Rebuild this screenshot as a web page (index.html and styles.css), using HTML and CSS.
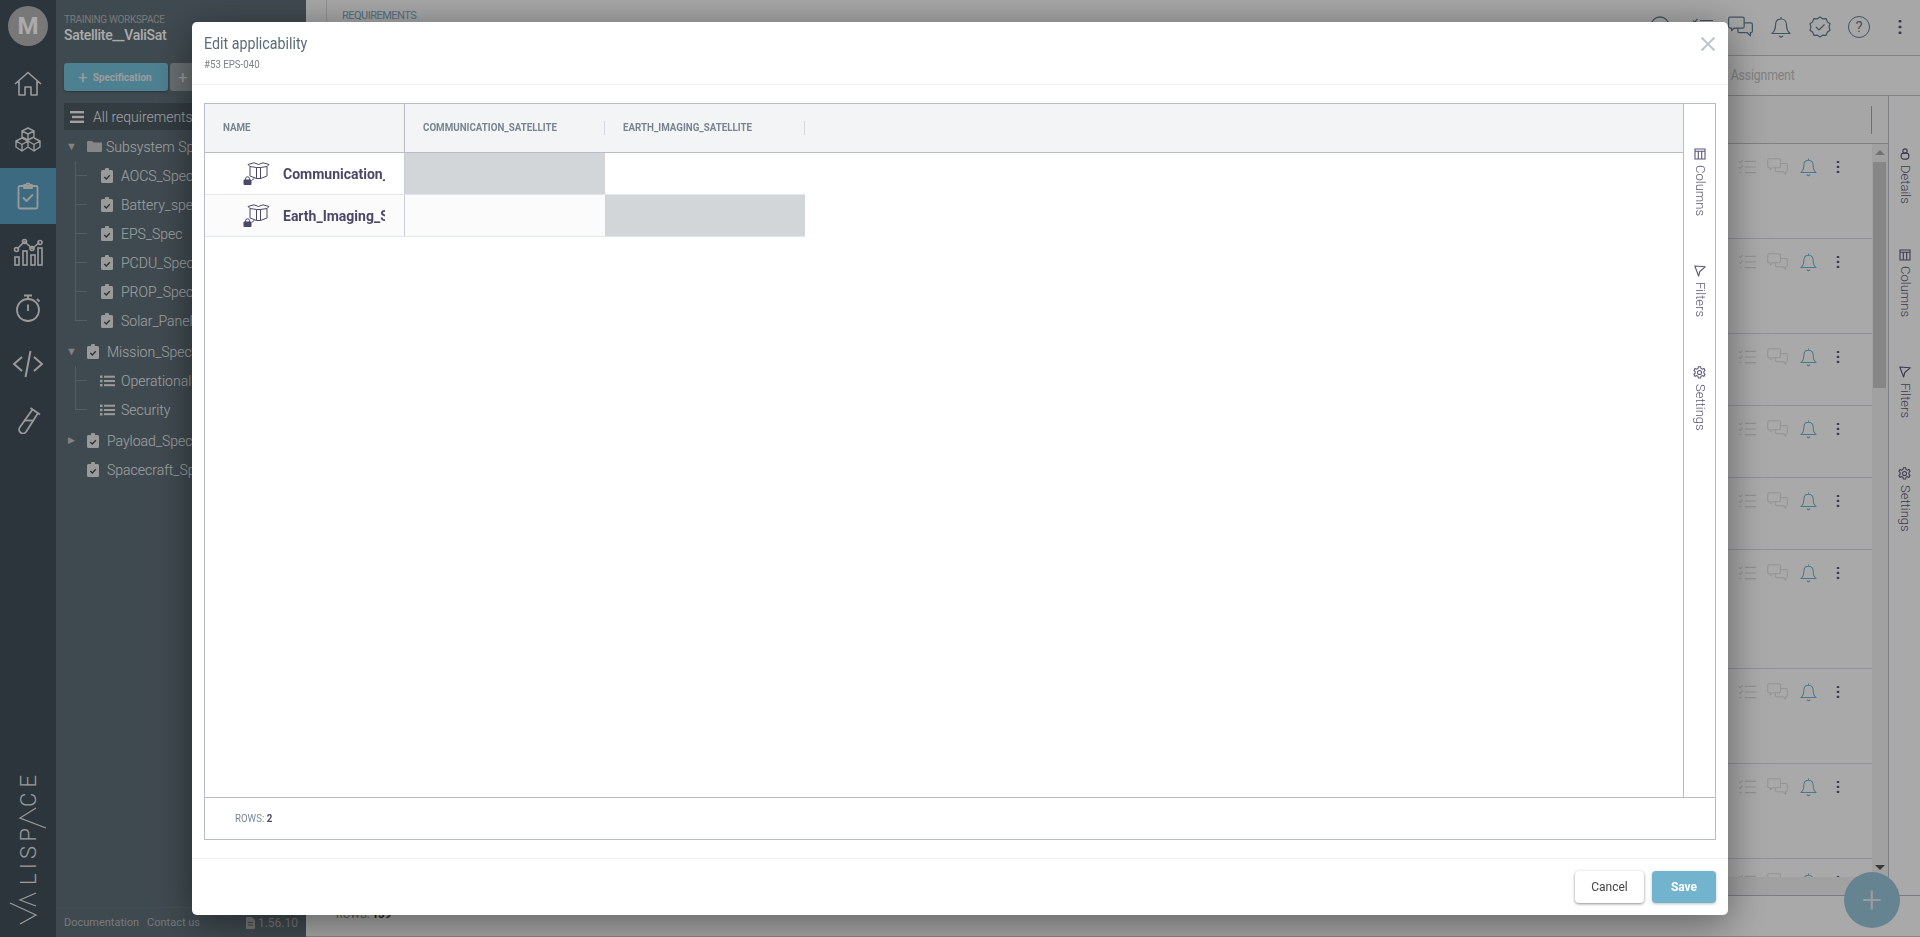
FILE: index.html
```html
<!DOCTYPE html>
<html lang="en">
<head>
<meta charset="utf-8">
<title>Edit applicability</title>
<link rel="stylesheet" href="styles.css">
</head>
<body>
<svg class="defs" width="0" height="0" aria-hidden="true">
  <symbol id="i-check" viewBox="0 0 22 18"><g fill="none" stroke="currentColor" stroke-width="1.2"><path d="M8 2.500h13M8 9h13M8 15.500h13"/><path d="M1 2.500l1.600 1.600L5.500 1M1 9l1.600 1.600L5.500 7.500"/><path d="M1.500 15.500h2.500"/></g></symbol>
  <symbol id="i-comment" viewBox="0 0 24 21"><g fill="none" stroke="currentColor" stroke-width="1.2" stroke-linejoin="round"><path d="M2 1h12a1.500 1.500 0 0 1 1.500 1.500V10a1.500 1.500 0 0 1-1.500 1.500H6L3.500 14v-2.500H2A1.500 1.500 0 0 1 .6 10V2.500A1.500 1.500 0 0 1 2 1z"/><path d="M15.500 6.500H22a1.500 1.500 0 0 1 1.400 1.500v6.500a1.500 1.500 0 0 1-1.400 1.500h-.5V19l-3-3H11a1.500 1.500 0 0 1-1.500-1.500v-3"/></g></symbol>
  <symbol id="i-bell" viewBox="0 0 20 22"><g fill="none" stroke="currentColor" stroke-width="1.200" stroke-linejoin="round"><path d="M10 .5v2M10 2.500c-3.500 0-5.500 2.500-5.500 6 0 3.500-.6 6-3.500 8.500h18c-2.900-2.500-3.500-5-3.500-8.500 0-3.500-2-6-5.500-6z"/><path d="M8 19.500l2 1.200 2-1.200"/></g></symbol>
  <symbol id="i-dots" viewBox="0 0 4 16"><g fill="currentColor"><rect x="0.500" y="1" width="3" height="2.500" rx="1"/><rect x="0.500" y="6.700" width="3" height="2.500" rx="1"/><rect x="0.500" y="12.400" width="3" height="2.500" rx="1"/></g></symbol>
  <symbol id="i-spec" viewBox="0 0 12 15"><path fill="currentColor" d="M4 2V1.500a2 2 0 0 1 4 0V2h2.500A1.500 1.500 0 0 1 12 3.500v10a1.500 1.500 0 0 1-1.500 1.500h-9A1.500 1.500 0 0 1 0 13.500v-10A1.500 1.500 0 0 1 1.500 2z"/><path fill="none" stroke="#414c52" stroke-width="1.300" d="M3.300 9l2 2 3.500-3.800"/></symbol>
  <symbol id="i-list" viewBox="0 0 15 12"><g fill="currentColor"><rect y="0.500" width="2.500" height="2.500"/><rect y="4.800" width="2.500" height="2.500"/><rect y="9" width="2.500" height="2.500"/><rect x="4" y="0.700" width="11" height="2"/><rect x="4" y="5" width="11" height="2"/><rect x="4" y="9.200" width="11" height="2"/></g></symbol>
  <symbol id="i-cols" viewBox="0 0 12 12"><path fill="none" stroke="currentColor" stroke-width="1.100" d="M1 1h10v10H1zM1 3.200h10M4.300 3.200V11M7.700 3.200V11"/></symbol>
  <symbol id="i-filter" viewBox="0 0 12 12"><path fill="none" stroke="currentColor" stroke-width="1.100" stroke-linejoin="round" d="M.8 1L11.200 1.800 5.800 6.500 4.600 11z"/></symbol>
  <symbol id="i-gear" viewBox="0 0 14 14"><g fill="none" stroke="currentColor" stroke-width="1.100"><circle cx="7" cy="7" r="2.200"/><path d="M5.800 .8h2.400l.4 1.800 1.500.8 1.700-.7 1.200 2.100-1.300 1.200v1.800l1.300 1.200-1.200 2.100-1.700-.7-1.500.8-.4 1.800H5.800l-.4-1.800-1.500-.8-1.700.7L1 9.000l1.300-1.200V6L1 4.800 2.200 2.700l1.700.7 1.500-.8z"/></g></symbol>
  <symbol id="i-details" viewBox="0 0 12 14"><g fill="none" stroke="currentColor" stroke-width="1.300"><circle cx="6" cy="3.500" r="2.500"/><rect x="1.500" y="6" width="9" height="7" rx="3"/></g></symbol>
  <symbol id="i-lockbox" viewBox="0 0 28 23"><g fill="none" stroke="#4a4868" stroke-width="1" stroke-linejoin="round"><path d="M7 4.500V14l6.500 2.500h4L24 14V4.500"/><path d="M13.500 5.500v11M17.500 5.500v11"/><path d="M5 2.500L11 .8l4.500 1.700L20 .8l6 1.700-2 2-6.500 1h-4L7 4.500z"/><path d="M8.500 18.500l3-2.200"/><path d="M2.500 18v-1.200a2 2 0 0 1 4 0V18"/></g><rect x="0.500" y="17.500" width="8" height="5.500" rx="1" fill="#4a4868"/></symbol>
</svg>

<div class="app">
  <nav class="rail">
    <div class="avatar">M</div>
    <a class="rail-item">
      <svg width="28" height="26" viewBox="0 0 28 26"><path fill="none" stroke="currentColor" stroke-width="1.600" stroke-linejoin="round" d="M1 13L14 1.500 27 13M5 10v14h6v-8h6v8h6V10"/></svg>
    </a>
    <a class="rail-item">
      <svg width="28" height="26" viewBox="0 0 28 26"><g fill="none" stroke="currentColor" stroke-width="1.400" stroke-linejoin="round"><path d="M14 1l6 3v6l-6 3-6-3V4zM8 4l6 3 6-3M14 7v6"/><path d="M8 11l6 3v6l-6 4-6-4v-6zM2 14l6 3.500L14 14M8 17.500V24"/><path d="M20 11l6 3v6l-6 4-6-4M14 14l6 3.500L26 14M20 17.500V24"/></g></svg>
    </a>
    <a class="rail-item active">
      <svg width="22" height="28" viewBox="0 0 22 28"><g fill="none" stroke="currentColor" stroke-width="1.800" stroke-linejoin="round"><rect x="1.500" y="4" width="19" height="22.500" rx="1.500"/><path d="M7 4V2.800h2.500a1.500 1.500 0 0 1 3 0H15V6H7z"/><path d="M6 15.500l3.500 3.500 6.500-6.500"/></g></svg>
    </a>
    <a class="rail-item">
      <svg width="30" height="28" viewBox="0 0 30 28"><g fill="none" stroke="currentColor" stroke-width="1.600"><rect x="2" y="19" width="4" height="8"/><rect x="10" y="13" width="4" height="14"/><rect x="18" y="17" width="4" height="10"/><rect x="25" y="10" width="4" height="17"/><path d="M4 11l7.500-7.500 7.500 7 7.500-6"/><circle cx="3.500" cy="11.500" r="2"/><circle cx="11.500" cy="3.500" r="2"/><circle cx="19" cy="10.500" r="2"/><circle cx="27" cy="4.500" r="2"/></g></svg>
    </a>
    <a class="rail-item">
      <svg width="26" height="28" viewBox="0 0 26 28"><g fill="none" stroke="currentColor" stroke-width="1.800"><circle cx="13" cy="16" r="11"/><path d="M9 1.500h8M13 1.500V5M13 10.500V17M22 5l2.500 2.500"/></g></svg>
    </a>
    <a class="rail-item">
      <svg width="32" height="28" viewBox="0 0 32 28"><path fill="none" stroke="currentColor" stroke-width="2" d="M10 7L2 14l8 7M22 7l8 7-8 7M18.500 1l-5 26"/></svg>
    </a>
    <a class="rail-item">
      <svg width="28" height="28" viewBox="0 0 28 28"><g fill="none" stroke="currentColor" stroke-width="1.800" stroke-linejoin="round"><path d="M16.500 2L26 8.500M18.500 3.500L6 21a3.700 3.700 0 0 0 6 5L24 7"/><path d="M10.500 14.500h9"/></g></svg>
    </a>
    <div class="rail-fill"></div>
    <svg class="logo" width="56" height="160" viewBox="0 0 56 160" role="img" aria-label="Valispace">
      <g fill="none" stroke="currentColor" stroke-width="1.200">
        <path d="M10 128l26 12-16 9"/>
        <path d="M36 118l-16 7 16 6"/>
        <path d="M46 53L20 43l16-10"/>
      </g>
      <text class="logo-text" transform="translate(36 110) rotate(-90)" textLength="57">LISP</text>
      <text class="logo-text" transform="translate(36 32) rotate(-90)" textLength="32">CE</text>
    </svg>
  </nav>

  <aside class="sidebar">
    <header class="ws">
      <div class="ws-label">TRAINING WORKSPACE</div>
      <div class="ws-name">Satellite__ValiSat</div>
    </header>
    <div class="side-actions">
      <button class="btn-spec"><span class="plus">+</span>Specification</button>
      <button class="btn-more"><span class="plus">+</span>Folder</button>
    </div>
    <div class="all-req">
      <svg width="14" height="12" viewBox="0 0 14 12"><g fill="currentColor"><rect width="14" height="2.400"/><rect x="2" y="4.800" width="12" height="2.400"/><rect y="9.600" width="14" height="2.400"/></g></svg>
      <span>All requirements</span>
    </div>
    <ul class="tree">
      <li class="node"><span class="arrow">▼</span><svg class="folder" width="15" height="11" viewBox="0 0 15 11"><path fill="currentColor" d="M0 1a1 1 0 0 1 1-1h4l1.500 1.500H14a1 1 0 0 1 1 1V10a1 1 0 0 1-1 1H1a1 1 0 0 1-1-1z"/></svg><span>Subsystem Specs</span></li>
      <li>
        <ul class="children">
          <li class="child"><i class="branch"></i><svg class="ico"><use href="#i-spec"/></svg><span>AOCS_Spec</span></li>
          <li class="child"><i class="branch"></i><svg class="ico"><use href="#i-spec"/></svg><span>Battery_spec</span></li>
          <li class="child"><i class="branch"></i><svg class="ico"><use href="#i-spec"/></svg><span>EPS_Spec</span></li>
          <li class="child"><i class="branch"></i><svg class="ico"><use href="#i-spec"/></svg><span>PCDU_Spec</span></li>
          <li class="child"><i class="branch"></i><svg class="ico"><use href="#i-spec"/></svg><span>PROP_Spec</span></li>
          <li class="child"><i class="branch"></i><svg class="ico"><use href="#i-spec"/></svg><span>Solar_Panel_Spec</span></li>
        </ul>
      </li>
      <li class="node gap"><span class="arrow">▼</span><svg class="ico"><use href="#i-spec"/></svg><span>Mission_Spec</span></li>
      <li>
        <ul class="children">
          <li class="child"><i class="branch"></i><svg class="ico-list"><use href="#i-list"/></svg><span>Operational</span></li>
          <li class="child"><i class="branch"></i><svg class="ico-list"><use href="#i-list"/></svg><span>Security</span></li>
        </ul>
      </li>
      <li class="node gap"><span class="arrow small">▶</span><svg class="ico"><use href="#i-spec"/></svg><span>Payload_Spec</span></li>
      <li class="node"><span class="arrow"></span><svg class="ico"><use href="#i-spec"/></svg><span>Spacecraft_Spec</span></li>
    </ul>
    <footer class="side-foot">
      <a>Documentation</a><a>Contact us</a>
      <span class="ver"><svg width="9" height="12" viewBox="0 0 9 12"><path fill="currentColor" fill-rule="evenodd" d="M1 0h5l3 3v8a1 1 0 0 1-1 1H1a1 1 0 0 1-1-1V1a1 1 0 0 1 1-1zM2 5v1h5V5zm0 2.500v1h5v-1z"/></svg>1.56.10</span>
    </footer>
  </aside>

  <main class="main">
    <div class="topbar">
      <div class="crumb-gutter"></div>
      <div class="crumb">REQUIREMENTS</div>
      <div class="top-icons">
        <svg class="t-search" viewBox="0 0 24 24"><g fill="none" stroke="currentColor" stroke-width="1.300"><circle cx="11" cy="11" r="9"/><path d="M18 18l5 5"/></g></svg>
        <svg class="t-check"><use href="#i-check"/></svg>
        <svg class="t-comment"><use href="#i-comment"/></svg>
        <svg class="t-bell"><use href="#i-bell"/></svg>
        <svg class="t-badge" viewBox="0 0 22 22"><g fill="none" stroke="currentColor" stroke-width="1.200"><path d="M11 1l2.800 1.800 3.300-.2 1.200 3.100 2.700 2-1 3.300 1 3.200-2.700 2-1.200 3.100-3.300-.2L11 21l-2.800-1.900-3.300.2-1.200-3.100-2.700-2 1-3.200-1-3.300 2.700-2 1.200-3.100 3.300.2z"/><path d="M7 11l3 3 5.500-5.500"/></g></svg>
        <span class="t-help">?</span>
        <svg class="t-dots"><use href="#i-dots"/></svg>
      </div>
    </div>
    <div class="tabs"><span>Assignment</span></div>
    <div class="content">
      <section class="list">
        <div class="toolbar"><i class="tool-sep"></i></div>
        <div class="scroller">
          <div class="rows">
            <div class="row h95"><svg class="a-check"><use href="#i-check"/></svg><svg class="a-comment"><use href="#i-comment"/></svg><svg class="a-bell"><use href="#i-bell"/></svg><svg class="a-dots"><use href="#i-dots"/></svg></div>
            <div class="row h95"><svg class="a-check"><use href="#i-check"/></svg><svg class="a-comment"><use href="#i-comment"/></svg><svg class="a-bell"><use href="#i-bell"/></svg><svg class="a-dots"><use href="#i-dots"/></svg></div>
            <div class="row h72"><svg class="a-check"><use href="#i-check"/></svg><svg class="a-comment"><use href="#i-comment"/></svg><svg class="a-bell"><use href="#i-bell"/></svg><svg class="a-dots"><use href="#i-dots"/></svg></div>
            <div class="row h72"><svg class="a-check"><use href="#i-check"/></svg><svg class="a-comment"><use href="#i-comment"/></svg><svg class="a-bell"><use href="#i-bell"/></svg><svg class="a-dots"><use href="#i-dots"/></svg></div>
            <div class="row h72"><svg class="a-check"><use href="#i-check"/></svg><svg class="a-comment"><use href="#i-comment"/></svg><svg class="a-bell"><use href="#i-bell"/></svg><svg class="a-dots"><use href="#i-dots"/></svg></div>
            <div class="row h119"><svg class="a-check"><use href="#i-check"/></svg><svg class="a-comment"><use href="#i-comment"/></svg><svg class="a-bell"><use href="#i-bell"/></svg><svg class="a-dots"><use href="#i-dots"/></svg></div>
            <div class="row h95"><svg class="a-check"><use href="#i-check"/></svg><svg class="a-comment"><use href="#i-comment"/></svg><svg class="a-bell"><use href="#i-bell"/></svg><svg class="a-dots"><use href="#i-dots"/></svg></div>
            <div class="row h95"><svg class="a-check"><use href="#i-check"/></svg><svg class="a-comment"><use href="#i-comment"/></svg><svg class="a-bell"><use href="#i-bell"/></svg><svg class="a-dots"><use href="#i-dots"/></svg></div>
            <div class="row h95"><svg class="a-check"><use href="#i-check"/></svg><svg class="a-comment"><use href="#i-comment"/></svg><svg class="a-bell"><use href="#i-bell"/></svg><svg class="a-dots"><use href="#i-dots"/></svg></div>
          </div>
          <div class="vbar">
            <span class="vbar-up"></span>
            <span class="vbar-thumb"></span>
            <span class="vbar-fill"></span>
            <span class="vbar-down"></span>
          </div>
        </div>
        <div class="hbar"><span class="hbar-right"></span></div>
      </section>
      <aside class="side-tools">
        <div class="tool tool-short"><svg class="tool-ico"><use href="#i-details"/></svg><span>Details</span></div>
        <div class="tool"><svg class="tool-ico"><use href="#i-cols"/></svg><span>Columns</span></div>
        <div class="tool"><svg class="tool-ico"><use href="#i-filter"/></svg><span>Filters</span></div>
        <div class="tool"><svg class="tool-ico-g"><use href="#i-gear"/></svg><span>Settings</span></div>
      </aside>
    </div>
    <footer class="main-foot">ROWS: <b>139</b></footer>
  </main>
</div>

<button class="fab">+</button>

<div class="backdrop">
  <div class="modal">
    <header class="m-head">
      <div>
        <h1 class="m-title"><span>Edit applicability</span></h1>
        <div class="m-sub"><span>#53 EPS-040</span></div>
      </div>
      <svg class="m-close" width="16" height="16" viewBox="0 0 16 16"><path fill="none" stroke="currentColor" stroke-width="2" d="M1.500 1.500l13 13M14.500 1.500l-13 13"/></svg>
    </header>
    <div class="m-body">
      <div class="grid-box">
        <div class="grid-main">
          <div class="grid">
            <div class="g-head">
              <div class="h-name"><span>NAME</span></div>
              <div class="h-col"><span>COMMUNICATION_SATELLITE</span></div>
              <div class="h-col"><span>EARTH_IMAGING_SATELLITE</span></div>
            </div>
            <div class="g-row">
              <div class="c-name"><svg class="lockbox"><use href="#i-lockbox"/></svg><span class="name-text">Communication_Satellite</span></div>
              <div class="c-val on"></div>
              <div class="c-val"></div>
            </div>
            <div class="g-row alt">
              <div class="c-name"><svg class="lockbox"><use href="#i-lockbox"/></svg><span class="name-text">Earth_Imaging_Satellite</span></div>
              <div class="c-val"></div>
              <div class="c-val on"></div>
            </div>
          </div>
          <aside class="grid-tools">
            <div class="tool"><svg class="tool-ico"><use href="#i-cols"/></svg><span>Columns</span></div>
            <div class="tool"><svg class="tool-ico"><use href="#i-filter"/></svg><span>Filters</span></div>
            <div class="tool"><svg class="tool-ico-g"><use href="#i-gear"/></svg><span>Settings</span></div>
          </aside>
        </div>
        <div class="grid-foot"><span>ROWS: <b>2</b></span></div>
      </div>
    </div>
    <footer class="m-foot">
      <button class="b-cancel">Cancel</button>
      <button class="b-save">Save</button>
    </footer>
  </div>
</div>
</body>
</html>
```

FILE: styles.css
```css
* { box-sizing: border-box; }
html, body { margin: 0; height: 100%; overflow: hidden; }
body { font-family: "Roboto", "Liberation Sans", sans-serif; background: #fcfcfc; color: #333; }
ul { list-style: none; margin: 0; padding: 0; }
button { font-family: inherit; border: 0; cursor: pointer; }
.defs { display: block; height: 0; width: 0; }

.app { display: flex; height: 937px; }

/* rail */
.rail { width: 56px; flex: none; display: flex; flex-direction: column; align-items: center; background: #425058; color: #e6e6e6; padding-bottom: 2px; }
.avatar { width: 40px; height: 40px; margin: 6px 0 10px; border-radius: 50%; background: #b4b4b4; color: #fff; font-weight: 700; font-size: 24px; line-height: 40px; text-align: center; }
.rail-item { width: 56px; height: 56px; display: flex; align-items: center; justify-content: center; }
.rail-item.active { background: #5a9ebf; }
.rail-fill { flex: 1; }
.logo { color: #e6e6e6; overflow: visible; flex: none; }
.logo-text { font-family: "Roboto", sans-serif; font-weight: 300; font-size: 22px; fill: currentColor; }

/* sidebar */
.sidebar { width: 250px; flex: none; display: flex; flex-direction: column; background: #5f6f78; color: #f0f0f0; overflow: hidden; }
.ws { padding: 14px 8px 0; height: 63px; }
.ws-label { font-size: 10px; line-height: 12px; color: #b4b4b4; letter-spacing: -.3px; }
.ws-name { font-size: 14px; line-height: 18px; font-weight: 500; letter-spacing: -.3px; color: #fff; }
.side-actions { display: flex; gap: 2px; padding-left: 8px; }
.btn-spec { width: 104px; height: 28px; background: #74c0da; color: #e8e8e8; border-radius: 3px; font-size: 10px; font-weight: 700; display: flex; align-items: center; padding: 0 14px; white-space: nowrap; box-shadow: 0 1px 2px rgba(0,0,0,.3); }
.btn-more { width: 80px; height: 28px; background: #9ea6ab; color: #e8e8e8; border-radius: 3px; font-size: 10px; font-weight: 700; display: flex; align-items: center; padding: 0 8px; }
.plus { font-size: 17px; font-weight: 400; margin-right: 5px; }
.all-req { margin: 12px 0 0 8px; height: 27px; background: #4c5a61; display: flex; align-items: center; gap: 9px; padding-left: 6px; font-size: 14px; font-weight: 300; white-space: nowrap; }
.tree { flex: 1; padding: 2px 0 0 8px; font-size: 14px; font-weight: 300; color: #f0f0f0; white-space: nowrap; }
.node { height: 29px; display: flex; align-items: center; }
.node.gap { margin-top: 2px; }
.arrow { width: 23px; flex: none; font-size: 11px; color: #c4c4c4; text-align: center; padding-right: 8px; line-height: 1; }
.arrow.small { font-size: 9px; }
.folder { margin-right: 4px; color: #c8c8c8; flex: none; }
.ico { width: 12px; height: 15px; flex: none; margin-right: 8px; color: #e6e6e6; }
.ico-list { width: 15px; height: 12px; flex: none; margin-right: 6px; color: #e6e6e6; margin-left: -1px; }
.children { margin-left: 11px; }
.child { height: 29px; display: flex; align-items: center; border-left: 1px solid #7c8a92; }
.child:last-child { border-left-color: transparent; }
.branch { width: 11px; height: 15px; align-self: flex-start; border-bottom: 1px solid #7c8a92; margin-right: 14px; flex: none; }
.child:last-child .branch { border-left: 1px solid #7c8a92; margin-left: -1px; width: 12px; }
.side-foot { height: 30px; border-top: 1px solid #66767f; display: flex; align-items: center; gap: 8px; padding: 0 8px; font-size: 11px; color: #b4b4b4; white-space: nowrap; }
.ver { margin-left: auto; display: flex; align-items: center; gap: 3px; font-size: 12px; }

/* main */
.main { flex: 1; min-width: 0; display: flex; flex-direction: column; background: #fdfdfd; }
.topbar { height: 56px; flex: none; display: flex; border-bottom: 1px solid #c4c4c4; background: #f9f9f9; }
.crumb-gutter { width: 21px; border-right: 1px solid #d8d8d8; }
.crumb { padding: 10px 0 0 15px; font-size: 11px; line-height: 12px; letter-spacing: -.5px; color: #7aa8be; }
.top-icons { margin-left: auto; display: flex; align-items: flex-start; color: #5f7f92; padding-top: 15px; }
.t-search { width: 24px; height: 24px; margin-right: 19px; }
.t-check { width: 22px; height: 18px; margin: 3px 14px 0 0; color: #5f7f92; }
.t-comment { width: 25px; height: 22px; margin: 1px 18px 0 0; }
.t-bell { width: 20px; height: 23px; margin: 1px 18px 0 0; }
.t-badge { width: 22px; height: 22px; margin: 1px 17px 0 0; }
.t-help { width: 22px; height: 22px; margin: 1px 28px 0 0; border: 1.300px solid #5f7f92; border-radius: 50%; font-size: 15px; line-height: 20px; text-align: center; color: #5f7f92; }
.t-dots { width: 4px; height: 16px; margin: 4px 18px 0 0; color: #5a5678; }
.tabs { height: 40px; flex: none; display: flex; justify-content: flex-end; align-items: center; padding: 0 125px 1px 0; font-size: 14px; letter-spacing: -.2px; color: #c2c2c2; border-bottom: 1px solid #c2c2c2; background: #fcfcfc; }
.tabs span { display: inline-block; transform: scaleX(.88); transform-origin: right center; }
.content { flex: 1; min-height: 0; display: flex; }
.list { flex: 1; min-width: 0; display: flex; flex-direction: column; }
.toolbar { height: 48px; flex: none; display: flex; justify-content: flex-end; align-items: center; padding-right: 16px; border-bottom: 1px solid #c0c0c0; background: #f8f8f8; }
.tool-sep { width: 1px; height: 28px; background: #a8a8a8; }
.scroller { flex: 1; min-height: 0; display: flex; overflow: hidden; }
.rows { flex: 1; min-width: 0; }
.row { display: flex; justify-content: flex-end; align-items: flex-start; padding: 14px 32px 0 0; border-bottom: 1px solid #d8d8e0; background: #fdfdfd; color: #dcdcdc; }
.h95 { height: 95px; }
.h72 { height: 72px; }
.h119 { height: 119px; }
.a-check { width: 19px; height: 16px; margin: 1px 10px 0 0; }
.a-comment { width: 21px; height: 18px; margin-right: 12px; }
.a-bell { width: 17px; height: 19px; margin-right: 19px; color: #6fb3d2; }
.a-dots { width: 4px; height: 14px; margin-top: 2px; color: #5a5678; }
.vbar { width: 16px; flex: none; display: flex; flex-direction: column; background: #f1f1f1; }
.vbar-up { height: 18px; flex: none; position: relative; }
.vbar-up::after, .vbar-down::after { content: ""; position: absolute; left: 3px; top: 6px; border: 5px solid transparent; border-top: 0; border-bottom: 5px solid #aaa; }
.vbar-down::after { border-bottom: 0; border-top: 5px solid #555; }
.vbar-thumb { height: 226px; flex: none; margin: 0 2px 0 1px; background: #c8c8c8; }
.vbar-fill { flex: 1; }
.vbar-down { height: 18px; flex: none; position: relative; }
.hbar { height: 18px; flex: none; background: #f1f1f1; position: relative; }
.hbar-right { position: absolute; right: 4px; top: 4px; border: 5px solid transparent; border-right: 0; border-left: 5px solid #999; }
.side-tools { width: 32px; flex: none; border-left: 1px solid #bcbcc8; background: #fdfdfd; color: #5a5678; display: flex; flex-direction: column; align-items: center; padding-top: 52px; gap: 49px; }
.tool { display: flex; flex-direction: column; align-items: center; gap: 5px; }
.tool-short { margin-bottom: -4px; }
.tool span { writing-mode: vertical-rl; font-size: 13px; font-weight: 300; line-height: 14px; white-space: nowrap; }
.tool-ico { width: 12px; height: 12px; }
.tool-ico-g { width: 13px; height: 13px; }
.main-foot { height: 42px; flex: none; border-top: 1px solid #b8b8c4; border-bottom: 1px solid #c8c8c8; padding: 12px 0 0 30px; font-size: 11px; color: #888; background: #fcfcfc; }
.main-foot b { color: #333; }

/* fab */
.fab { position: fixed; left: 1844px; top: 872px; width: 56px; height: 56px; border-radius: 50%; background: #98c4d8; color: #e8e8e8; font-size: 36px; font-weight: 300; line-height: 56px; padding: 0; }

/* modal */
.backdrop { position: fixed; inset: 0; background: rgba(0,0,0,.33); display: flex; align-items: center; justify-content: center; }
.modal { width: 1536px; height: 893px; background: #fff; border-radius: 5px; display: flex; flex-direction: column; box-shadow: 0 8px 40px rgba(0,0,0,.45); }
.m-head { height: 63px; flex: none; display: flex; justify-content: space-between; padding: 12px 12px 0; border-bottom: 1px solid #eeeff1; }
.m-title { margin: 0; font-size: 16px; line-height: 20px; font-weight: 400; color: #5c6b75; }
.m-title span, .m-sub span, .grid-foot span, .h-col span, .h-name span { display: inline-block; transform-origin: left center; white-space: nowrap; }
.m-title span { transform: scaleX(.89); }
.m-sub { font-size: 11px; line-height: 13px; margin-top: 4px; color: #7b8186; }
.m-sub span { transform: scaleX(.88); }
.m-close { color: #bcc5cb; margin: 2px 0 0 0; }
.m-body { flex: 1; min-height: 0; padding: 18px 12px; border-bottom: 1px solid #eeeff1; display: flex; }
.grid-box { flex: 1; min-width: 0; border: 1px solid #b9bcc8; display: flex; flex-direction: column; }
.grid-main { flex: 1; min-height: 0; display: flex; }
.grid { flex: 1; min-width: 0; }
.g-head { height: 49px; display: flex; background: #f3f4f6; border-bottom: 1px solid #b9bcc8; }
.h-name { width: 200px; flex: none; display: flex; align-items: center; padding: 0 0 1px 18px; border-right: 1px solid #b9bcc8; font-size: 10.500px; font-weight: 700; color: #788591; }
.h-col { width: 200px; flex: none; display: flex; align-items: center; justify-content: space-between; padding: 0 0 1px 18px; font-size: 10.500px; font-weight: 700; color: #788591; }
.h-col::after { content: ""; width: 1px; height: 14px; background: #d5d8dc; }
.h-name span, .h-col span { transform: scaleX(.93); }
.g-row { height: 42px; width: 600px; display: flex; border-bottom: 1px solid #e2e6ec; }
.g-row.alt { background: #fbfbfb; }
.c-name { width: 200px; flex: none; display: flex; align-items: center; padding-left: 38px; border-right: 1px solid #c8ccd5; }
.lockbox { width: 28px; height: 23px; flex: none; margin-right: 12px; }
.name-text { width: 102px; overflow: hidden; white-space: nowrap; font-size: 14px; font-weight: 700; color: #4a4868; }
.c-val { width: 200px; flex: none; }
.c-val.on { background: #d2d6d9; }
.grid-tools { width: 32px; flex: none; border-left: 1px solid #b9bcc8; color: #5a5678; display: flex; flex-direction: column; align-items: center; padding-top: 44px; gap: 49px; }
.grid-foot { height: 42px; flex: none; border-top: 1px solid #b9bcc8; display: flex; align-items: center; padding: 0 0 1px 30px; font-size: 11px; color: #7b8794; }
.grid-foot span { transform: scaleX(.88); }
.grid-foot b { color: #4a4868; }
.m-foot { height: 56px; flex: none; display: flex; justify-content: flex-end; gap: 8px; padding: 12px 12px 0 0; }
.m-foot button { height: 32px; border-radius: 4px; font-size: 12px; }
.b-cancel { width: 69px; background: #fff; color: #444; box-shadow: 0 1px 3px rgba(0,0,0,.45); }
.b-save { width: 64px; background: #72b3cd; color: #fff; font-weight: 700; box-shadow: 0 1px 3px rgba(0,0,0,.25); }
```
